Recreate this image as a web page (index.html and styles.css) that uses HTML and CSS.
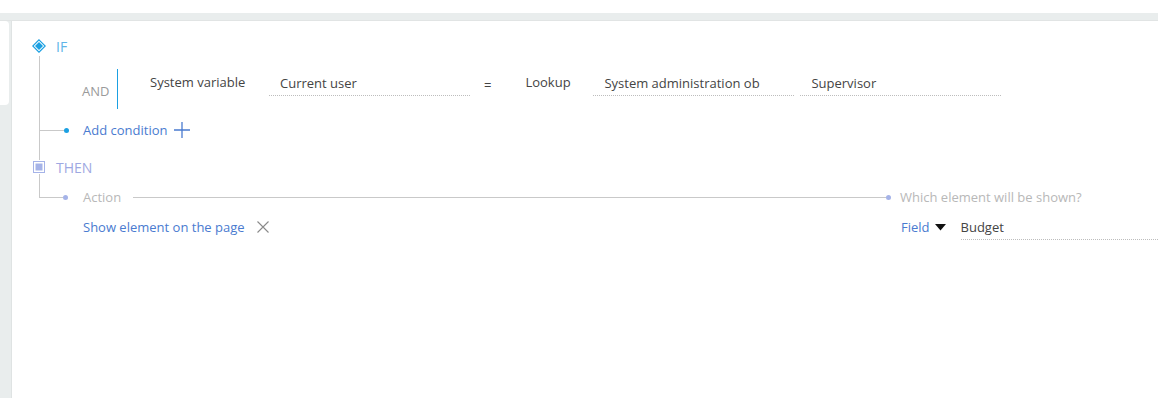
FILE: index.html
```html
<!DOCTYPE html>
<html>
<head>
<meta charset="UTF-8">
<title>Business rule</title>
<link rel="stylesheet" href="styles.css">
</head>
<body>

<div class="top-strip"></div>
<div class="band"></div>

<div class="workspace">
	<div class="side">
		<div class="side-card"></div>
	</div>

	<div class="card">
		<!-- IF block -->
		<div class="head">
			<svg class="ico" width="14" height="14" viewBox="0 0 14 14">
				<path d="M7 0.8 L13.2 7 L7 13.2 L0.8 7 Z" fill="none" stroke="#1ba0e2" stroke-width="1.2"/>
				<path d="M7 3 L11 7 L7 11 L3 7 Z" fill="#1ba0e2"/>
			</svg>
			<span class="if-label">IF</span>
		</div>

		<div class="if-body">
			<div class="cond-row">
				<span class="and">AND</span>
				<span class="and-bar"></span>
				<span class="cond-label first">System variable</span>
				<div class="field w200">Current user</div>
				<span class="eq">=</span>
				<span class="cond-label">Lookup</span>
				<div class="field w200">System administration ob</div>
				<div class="field w200 near">Supervisor</div>
			</div>

			<div class="add-row">
				<span class="hline"></span>
				<span class="dot blue"></span>
				<span class="link">Add condition</span>
				<svg class="plus" width="16" height="16" viewBox="0 0 16 16">
					<path d="M8 0 V16 M0 8 H16" stroke="#4a7bd0" stroke-width="1.3"/>
				</svg>
			</div>
		</div>

		<!-- THEN block -->
		<div class="head then">
			<svg class="ico" width="12" height="12" viewBox="0 0 12 12">
				<rect x="0.5" y="0.5" width="11" height="11" fill="none" stroke="#a5b3e8"/>
				<rect x="2.5" y="2.5" width="7" height="7" fill="#a5b3e8"/>
			</svg>
			<span class="then-label">THEN</span>
		</div>

		<div class="then-body">
			<div class="stem"></div>
			<div class="action-row">
				<span class="elbow"></span>
				<span class="dot lilac"></span>
				<span class="muted">Action</span>
				<span class="long-line"></span>
				<div class="right-col">
					<span class="dot lilac"></span>
					<span class="muted">Which element will be shown?</span>
				</div>
			</div>

			<div class="value-row">
				<span class="link">Show element on the page</span>
				<svg class="cross" width="12" height="12" viewBox="0 0 12 12">
					<path d="M0.5 0.5 L11.5 11.5 M11.5 0.5 L0.5 11.5" stroke="#8a8a8a" stroke-width="1.1"/>
				</svg>
				<div class="right-col">
					<span class="link">Field</span>
					<svg class="caret" width="11" height="7" viewBox="0 0 11 7">
						<path d="M0 0 H11 L5.5 6.5 Z" fill="#111111"/>
					</svg>
					<div class="field grow">Budget</div>
				</div>
			</div>
		</div>
	</div>
</div>

</body>
</html>
```

FILE: styles.css
```css
	*
	{
		box-sizing: border-box;
	}
	body
	{
		margin: 0;
		background-color: #ffffff;
		font-family: "Open Sans", "Noto Sans", sans-serif;
		font-size: 13px;
		color: #444444;
		overflow: hidden;
	}
	.top-strip { height: 13px; background-color: #ffffff; }
	.band { height: 8px; background-color: #e9eded; border-bottom: 1px solid #e1e4e4; }

	.workspace { display: flex; height: 377px; }
	.side { width: 11px; background-color: #e9eded; }
	.side-card
	{
		width: 9px;
		height: 84px;
		background-color: #ffffff;
		border-radius: 0 4px 4px 0;
	}
	.card
	{
		flex: 1;
		background-color: #ffffff;
		border-left: 1px solid #dfe3e3;
		padding: 15px 0 0 20px;
	}

	/* headers */
	.head { display: flex; align-items: center; height: 20px; }
	.head .ico { margin-right: 10px; }
	.head.then { height: 14px; margin-left: 1px; }
	.head.then .ico { margin-right: 11px; }
	.if-label { color: #5fb4e8; font-size: 14px; }
	.then-label { color: #9ea8e2; font-size: 14px; }

	/* IF body */
	.if-body
	{
		margin-left: 7px;
		border-left: 1px solid #c9c9c9;
		padding: 13px 0 20px 0;
	}
	.cond-row { display: flex; align-items: flex-start; height: 40px; padding-left: 42px; }
	.and { color: #9a9a9a; margin-top: 13px; width: 35px; }
	.and-bar { width: 1px; height: 40px; background-color: #1ba0e2; }
	.cond-label { margin-top: 4px; line-height: 18px; color: #444444; }
	.cond-label.first { margin-left: 32px; width: 119px; }
	.field
	{
		margin-top: 3px;
		height: 24px;
		line-height: 18px;
		padding: 2px 0 0 11px;
		border-bottom: 1px dotted #bdbdbd;
		color: #444444;
		white-space: nowrap;
		overflow: hidden;
	}
	.w200 { width: 201px; }
	.near { margin-left: 6px; }
	.eq { margin: 7px 36px 0 14px; line-height: 18px; }
	.eq + .cond-label { width: 68px; margin-left: -2px; }

	.add-row { display: flex; align-items: center; height: 20px; margin-top: 11px; }
	.hline { width: 24px; height: 1px; background-color: #c9c9c9; }
	.dot { width: 5px; height: 5px; border-radius: 50%; }
	.dot.blue { background-color: #1ba0e2; }
	.dot.lilac { background-color: #a5b3e8; }
	.link { color: #4a7bd0; }
	.add-row .link { margin-left: 14px; }
	.plus { margin-left: 7px; }

	/* THEN body */
	.then-body { margin-left: 7px; }
	.stem { width: 1px; height: 13px; background-color: #c9c9c9; }
	.action-row { display: flex; align-items: center; height: 20px; }
	.elbow
	{
		align-self: flex-start;
		width: 24px;
		height: 11px;
		border-left: 1px solid #c9c9c9;
		border-bottom: 1px solid #c9c9c9;
	}
	.muted { color: #b8b8b8; margin-left: 15px; }
	.long-line { flex: 1; height: 1px; background-color: #c9c9c9; margin-left: 12px; }
	.right-col { display: flex; align-items: center; width: 272px; }
	.right-col .muted { margin-left: 9px; }

	.value-row { display: flex; align-items: center; height: 24px; margin-top: 8px; padding-left: 44px; }
	.cross { margin-left: 12px; }
	.value-row .right-col { margin-left: auto; padding-left: 15px; }
	.caret { margin-left: 5px; margin-right: 15px; }
	.field.grow { flex: 1; margin-top: 0; padding-left: 0; height: 26px; padding-top: 4px; }
```
